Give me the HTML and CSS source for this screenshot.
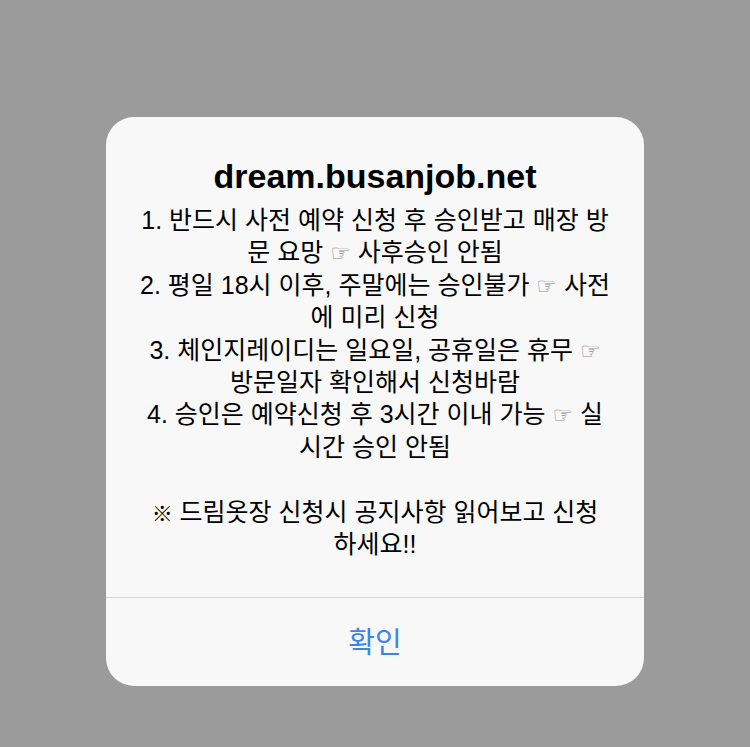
FILE: index.html
```html
<!DOCTYPE html>
<html lang="ko">
<head>
<meta charset="utf-8">
<title>dream.busanjob.net</title>
<link rel="stylesheet" href="styles.css">
</head>
<body>
<div class="alert">
  <div class="content">
    <div class="title">dream.busanjob.net</div>
    <div class="message">
      <div class="line">1. 반드시 사전 예약 신청 후 승인받고 매장 방</div>
      <div class="line">문 요망 <span class="hand">☞</span> 사후승인 안됨</div>
      <div class="line">2. 평일 18시 이후, 주말에는 승인불가 <span class="hand">☞</span> 사전</div>
      <div class="line">에 미리 신청</div>
      <div class="line">3. 체인지레이디는 일요일, 공휴일은 휴무 <span class="hand">☞</span></div>
      <div class="line">방문일자 확인해서 신청바람</div>
      <div class="line">4. 승인은 예약신청 후 3시간 이내 가능 <span class="hand">☞</span> 실</div>
      <div class="line">시간 승인 안됨</div>
      <div class="line blank">&nbsp;</div>
      <div class="line"><span class="mark">※</span> 드림옷장 신청시 공지사항 읽어보고 신청</div>
      <div class="line">하세요!!</div>
    </div>
  </div>
  <div class="actions">
    <div class="button">확인</div>
  </div>
</div>
</body>
</html>
```

FILE: styles.css
```css
html, body {
  margin: 0;
  padding: 0;
}
body {
  width: 750px;
  height: 747px;
  background: #9b9b9b;
  font-family: "Liberation Sans", "Noto Sans CJK KR", sans-serif;
  color: #000;
  overflow: hidden;
}
.alert {
  width: 538px;
  margin: 117px auto 0;
  background: #f8f8f8;
  border-radius: 28px;
  overflow: hidden;
}
.content {
  padding: 39px 10px 37px;
  text-align: center;
}
.title {
  font-size: 34px;
  line-height: 40px;
  font-weight: bold;
}
.message {
  margin-top: 8px;
  font-size: 25px;
  line-height: 32.4px;
}
.line {
  white-space: nowrap;
  height: 32.4px;
}
.hand {
  font-family: "DejaVu Sans", sans-serif;
  font-size: 23px;
  line-height: 1;
  color: #8a8a8a;
}
.mark {
  font-size: 21px;
  line-height: 1;
}
.actions {
  border-top: 1px solid #d6d6d8;
}
.button {
  height: 84px;
  padding-bottom: 4px;
  display: flex;
  align-items: center;
  justify-content: center;
  font-family: "Noto Sans CJK KR", sans-serif;
  font-size: 29px;
  color: #3a84e8;
}
```
